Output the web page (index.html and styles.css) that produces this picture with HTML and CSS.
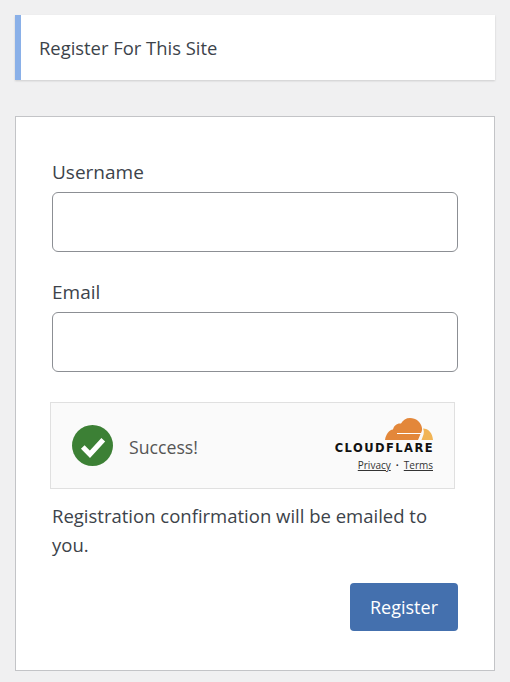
FILE: index.html
```html
<!DOCTYPE html>
<html>
<head>
    <title>Register For This Site</title>
    <link rel="stylesheet" href="styles.css">
</head>
<body>
    <p class="message">Register For This Site</p>
    <form class="register-form" onsubmit="return false">
        <div class="field">
            <label for="username">Username</label>
            <input type="text" id="username">
        </div>
        <div class="field">
            <label for="email">Email</label>
            <input type="text" id="email">
        </div>
        <div class="turnstile">
            <div class="turnstile-status">
                <svg class="check-icon" width="41" height="41" viewBox="0 0 40 40">
                    <circle cx="20" cy="20" r="20" fill="#3c8035"/>
                    <path d="M10.5 21.5l7 7 13-14" fill="none" stroke="#fff" stroke-width="5"/>
                </svg>
                <span class="success-text">Success!</span>
            </div>
            <div class="turnstile-brand">
                <svg class="cloud-logo" width="48" height="22" viewBox="0 0 48 22">
                    <path d="M0 22C1 16 4 12 8 11.5 9 7.5 12 5 16 5.5 18 2 21 0 25 0 31 0 36 4 37 10 37.5 12 36.5 14 35.5 16L33 22Z" fill="#e3873a"/>
                    <path d="M38 10.5C43.5 10.5 47.5 15 48 22H36.5L38.5 16.5C39 14.5 39 12.5 38 10.5Z" fill="#f1b455"/>
                    <path d="M12 15.5H36" stroke="#fff" stroke-width="1" fill="none"/>
                </svg>
                <div class="cloud-name">CLOUDFLARE</div>
                <div class="turnstile-links"><a href="#">Privacy</a><span class="dot">•</span><a href="#">Terms</a></div>
            </div>
        </div>
        <p class="confirm-note">Registration confirmation will be emailed to you.</p>
        <div class="submit-row">
            <button type="submit" class="register-button">Register</button>
        </div>
    </form>
</body>
</html>
```

FILE: styles.css
```css
body {
    margin: 0;
    padding: 15px 15px 12px;
    background-color: #f0f0f1;
    color: #3c434a;
    font-family: "Open Sans", "Noto Sans", sans-serif;
}

.message {
    margin: 0 0 36px;
    padding: 1px 0 0 18px;
    box-sizing: border-box;
    height: 65px;
    line-height: 63px;
    background-color: #fff;
    border-left: 6px solid #8ab0e8;
    box-shadow: 0 1px 2px rgba(0, 0, 0, 0.15);
    font-size: 18.4px;
}

.register-form {
    padding: 42px 36px 39px;
    background-color: #fff;
    border: 1px solid #c3c4c7;
}

.field {
    margin-bottom: 27px;
}

.field label {
    display: block;
    height: 33px;
    line-height: 27px;
    font-size: 19px;
}

.field input {
    display: block;
    box-sizing: border-box;
    width: 100%;
    height: 60px;
    border: 1px solid #8c8f94;
    border-radius: 6px;
    background-color: #fff;
}

.turnstile {
    display: flex;
    justify-content: space-between;
    box-sizing: border-box;
    width: 405px;
    height: 87px;
    margin: 30px 0 12px -2px;
    padding: 15px 21px 0 21px;
    background-color: #fafafa;
    border: 1px solid #e0e0e0;
}

.turnstile-status {
    display: flex;
    align-items: center;
    gap: 16px;
    height: 54px;
}

.success-text {
    padding-top: 4px;
    color: #555;
    font-size: 17.7px;
}

.turnstile-brand {
    display: flex;
    flex-direction: column;
    align-items: flex-end;
}

.cloud-name {
    color: #111;
    font-family: "DejaVu Sans", sans-serif;
    font-size: 11.5px;
    font-weight: bold;
    line-height: 16px;
    letter-spacing: 1.45px;
    margin-right: -1px;
}

.turnstile-links {
    display: flex;
    align-items: center;
    gap: 5px;
    margin-top: 2px;
    color: #333;
    font-size: 10px;
    line-height: 14px;
}

.turnstile-links a {
    color: #333;
}

.dot {
    font-size: 8px;
}

.confirm-note {
    margin: 0 0 24px;
    font-size: 18.5px;
    line-height: 29px;
}

.submit-row {
    display: flex;
    justify-content: flex-end;
}

.register-button {
    width: 108px;
    height: 48px;
    padding: 0;
    background-color: #4470ae;
    color: #fff;
    border: none;
    border-radius: 4px;
    font-family: inherit;
    font-size: 18px;
}
```
